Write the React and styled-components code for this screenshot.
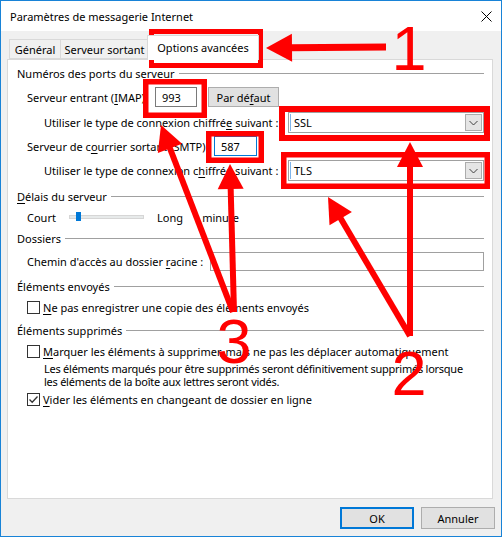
import React from 'react';
import styled, { createGlobalStyle } from 'styled-components';

const Global = createGlobalStyle`
  html, body { margin: 0; padding: 0; background: #ffffff; }
  body { font-family: "Noto Sans", "DejaVu Sans", sans-serif; font-size: 11px; color: #000; }
  * { box-sizing: border-box; }
`;

const Window = styled.div`
  position: relative;
  width: 502px;
  height: 537px;
  border: 1px solid #1883d7;
  display: flex;
  flex-direction: column;
  background: #f0f0f0;
  overflow: hidden;
`;

const TitleBar = styled.div`
  height: 30px;
  flex: none;
  background: #ffffff;
  display: flex;
  align-items: center;
  justify-content: space-between;
  padding: 0 9px;
  font-size: 11px;
`;

const Body = styled.div`
  flex: 1;
  display: flex;
  flex-direction: column;
  padding: 4px 6px 7px 6px;
`;

const TabStrip = styled.div`
  height: 24px;
  display: flex;
  align-items: flex-end;
  padding-left: 2px;
  position: relative;
  z-index: 1;
`;

const Tab = styled.div`
  width: ${p => p.$w}px;
  height: ${p => (p.$active ? 25 : 20)}px;
  margin-left: ${p => p.$ml || 0}px;
  margin-bottom: ${p => (p.$active ? -1 : 0)}px;
  border: 1px solid #d9d9d9;
  border-bottom: ${p => (p.$active ? 'none' : '1px solid #d9d9d9')};
  background: ${p => (p.$active ? '#ffffff' : '#f0f0f0')};
  display: flex;
  align-items: center;
  justify-content: center;
  padding-bottom: ${p => (p.$active ? 2 : 0)}px;
  white-space: nowrap;
`;

const Panel = styled.div`
  height: 440px;
  flex: none;
  margin-right: 2px;
  background: #ffffff;
  border: 1px solid #d9d9d9;
  padding-right: 8px;
  display: flex;
  flex-direction: column;
`;

const Legend = styled.div`
  display: flex;
  align-items: center;
  height: 16px;
  margin-top: ${p => p.$mt}px;
  padding-left: 9px;
  white-space: nowrap;
  &::after {
    content: '';
    flex: 1;
    height: 1px;
    background: #a0a0a0;
    margin-left: 4px;
  }
`;

const Row = styled.div`
  display: flex;
  align-items: center;
  height: ${p => p.$h || 16}px;
  margin-top: ${p => p.$mt}px;
  padding-left: ${p => p.$pl}px;
  white-space: nowrap;
`;

const Label = styled.span`
  flex: none;
  width: ${p => (p.$w ? `${p.$w}px` : 'auto')};
  padding-left: ${p => p.$pl || 0}px;
`;

const Key = styled.span`
  text-decoration: underline;
  text-underline-offset: 2px;
  text-decoration-thickness: 1px;
`;

const TextInput = styled.div`
  flex: none;
  width: ${p => p.$w}px;
  height: 20px;
  border: 1px solid ${p => (p.$focus ? '#0078d7' : '#7a7a7a')};
  background: #fff;
  display: flex;
  align-items: center;
  padding-left: 6px;
`;

const PathInput = styled.div`
  flex: 1;
  height: 19px;
  border: 1px solid #a0a0a0;
  background: #fff;
`;

const Button = styled.div`
  flex: none;
  width: ${p => p.$w}px;
  height: ${p => p.$h || 22}px;
  margin-left: ${p => p.$ml || 0}px;
  background: #e1e1e1;
  border: ${p => (p.$default ? '2px solid #0078d7' : '1px solid #adadad')};
  display: flex;
  align-items: center;
  justify-content: center;
`;

const Combo = styled.div`
  flex: none;
  width: 196px;
  height: 21px;
  border: 1px solid #a0a0a0;
  background: #fff;
  display: flex;
  align-items: center;
  padding: 1px;
`;

const ComboText = styled.div`
  flex: 1;
  height: 100%;
  display: flex;
  align-items: center;
  padding-left: 3px;
  border-left: 1px solid #7eb4ea;
`;

const ComboButton = styled.div`
  flex: none;
  width: 17px;
  height: 17px;
  background: #e5e5e5;
  border: 1px solid #acacac;
  display: flex;
  align-items: center;
  justify-content: center;
`;

const Track = styled.div`
  position: relative;
  flex: none;
  width: 75px;
  height: 4px;
  background: #e7eaea;
  border: 1px solid #d6d6d6;
`;

const Thumb = styled.div`
  position: absolute;
  left: 6px;
  top: -4px;
  width: 5px;
  height: 9px;
  background: #0078d7;
`;

const Box = styled.div`
  flex: none;
  width: 13px;
  height: 13px;
  border: 1px solid #333333;
  background: #fff;
  margin-right: 3px;
  display: flex;
  align-items: center;
  justify-content: center;
`;

const Desc = styled.div`
  margin-top: ${p => p.$mt}px;
  padding-left: 36px;
  line-height: 13px;
  white-space: nowrap;
  letter-spacing: -0.25px;
`;

const Footer = styled.div`
  height: 22px;
  margin-top: 8px;
  display: flex;
  justify-content: flex-end;
  gap: 7px;
`;

const Overlay = styled.svg`
  position: absolute;
  left: -1px;
  top: -1px;
  width: 502px;
  height: 537px;
  pointer-events: none;
  overflow: visible;
`;

const RED = '#ff0000';

function Arrow({ from, to, w = 6, hl = 25, hw = 26 }) {
  const dx = to[0] - from[0];
  const dy = to[1] - from[1];
  const len = Math.hypot(dx, dy);
  const ux = dx / len;
  const uy = dy / len;
  const bx = to[0] - ux * hl;
  const by = to[1] - uy * hl;
  const px = -uy * (hw / 2);
  const py = ux * (hw / 2);
  const pts = `${to[0]},${to[1]} ${bx + px},${by + py} ${bx - px},${by - py}`;
  return (
    <g>
      <line x1={from[0]} y1={from[1]} x2={bx + ux * 2} y2={by + uy * 2} stroke={RED} strokeWidth={w} />
      <polygon points={pts} fill={RED} />
    </g>
  );
}

function RedBox({ x1, y1, x2, y2, t = 5.5 }) {
  return (
    <rect
      x={x1 + t / 2}
      y={y1 + t / 2}
      width={x2 - x1 + 1 - t}
      height={y2 - y1 + 1 - t}
      fill="none"
      stroke={RED}
      strokeWidth={t}
    />
  );
}

const Chevron = () => (
  <svg width="9" height="6" viewBox="0 0 9 6">
    <polyline points="0.5,1 4.5,5 8.5,1" fill="none" stroke="#404040" strokeWidth="1" />
  </svg>
);

const CloseIcon = () => (
  <svg width="11" height="11" viewBox="0 0 11 11">
    <line x1="0.5" y1="0.5" x2="10.5" y2="10.5" stroke="#000" strokeWidth="1" />
    <line x1="10.5" y1="0.5" x2="0.5" y2="10.5" stroke="#000" strokeWidth="1" />
  </svg>
);

const Check = () => (
  <svg width="11" height="11" viewBox="0 0 11 11">
    <polyline points="1.5,5.5 4.2,8.3 9.5,2.5" fill="none" stroke="#333" strokeWidth="1.3" />
  </svg>
);

const numFont = 'Liberation Sans, Arial, sans-serif';

export default function App() {
  return (
    <>
      <Global />
      <Window>
        <TitleBar>
          <span>Paramètres de messagerie Internet</span>
          <CloseIcon />
        </TitleBar>
        <Body>
          <TabStrip>
            <Tab $w={52}>Général</Tab>
            <Tab $w={89} $ml={-1}>Serveur sortant</Tab>
            <Tab $w={112} $ml={-2} $active>Options avancées</Tab>
          </TabStrip>
          <Panel>
            <Legend $mt={5}>Numéros des ports du serveur</Legend>
            <Row $mt={6} $h={20} $pl={19}>
              <Label $w={128}>Serveur entrant (<Key>I</Key>MAP)</Label>
              <TextInput $w={42}>993</TextInput>
              <Button $w={71} $h={20} $ml={11}>Par dé<Key>f</Key>aut</Button>
            </Row>
            <Row $mt={5} $h={21} $pl={36}>
              <Label $w={244}>Utiliser le type de connexion chiffré<Key>e</Key> suivant :</Label>
              <Combo>
                <ComboText>SSL</ComboText>
                <ComboButton><Chevron /></ComboButton>
              </Combo>
            </Row>
            <Row $mt={3} $h={20} $pl={19}>
              <Label $w={187}>Serveur de c<Key>o</Key>urrier sortant (SMTP) :</Label>
              <TextInput $w={43} $focus>587</TextInput>
            </Row>
            <Row $mt={4} $h={21} $pl={36}>
              <Label $w={244}>Utiliser le type de connexion c<Key>h</Key>iffrée suivant :</Label>
              <Combo>
                <ComboText>TLS</ComboText>
                <ComboButton><Chevron /></ComboButton>
              </Combo>
            </Row>

            <Legend $mt={7}><span><Key>D</Key>élais du serveur</span></Legend>
            <Row $mt={5} $pl={19}>
              <Label $w={42}>Court</Label>
              <Track><Thumb /></Track>
              <Label $w={49} $pl={13}>Long</Label>
              <Label>1 minute</Label>
            </Row>

            <Legend $mt={5}>Dossiers</Legend>
            <Row $mt={6} $h={19} $pl={19}>
              <Label $w={183}>Chemin d'accès au dossier <Key>r</Key>acine :</Label>
              <PathInput />
            </Row>

            <Legend $mt={7}>Éléments envoyés</Legend>
            <Row $mt={5} $pl={19}>
              <Box />
              <Label><Key>N</Key>e pas enregistrer une copie des éléments envoyés</Label>
            </Row>

            <Legend $mt={7}>Éléments supprimés</Legend>
            <Row $mt={5} $pl={19}>
              <Box />
              <Label><Key>M</Key>arquer les éléments à supprimer, mais ne pas les déplacer automatiquement</Label>
            </Row>
            <Desc $mt={3}>
              Les éléments marqués pour être supprimés seront définitivement supprimés lorsque
              <br />
              les éléments de la boîte aux lettres seront vidés.
            </Desc>
            <Row $mt={3} $pl={19}>
              <Box><Check /></Box>
              <Label><Key>V</Key>ider les éléments en changeant de dossier en ligne</Label>
            </Row>
          </Panel>
          <Footer>
            <Button $w={74} $default>OK</Button>
            <Button $w={74}>Annuler</Button>
          </Footer>
        </Body>

        <Overlay viewBox="0 0 502 537">
          <RedBox x1={149} y1={29} x2={262} y2={67} t={5} />
          <RedBox x1={143} y1={79} x2={206} y2={117} />
          <RedBox x1={279} y1={106} x2={489} y2={140} t={6} />
          <RedBox x1={281} y1={152} x2={489} y2={188} />
          <RedBox x1={206} y1={131} x2={263} y2={162} />

          <Arrow from={[386, 47]} to={[266, 48]} w={7} hl={26} hw={28} />
          <Arrow from={[410, 336]} to={[410, 142]} />
          <Arrow from={[410, 336]} to={[328, 197]} />
          <Arrow from={[233, 312]} to={[161, 125]} />
          <Arrow from={[234, 312]} to={[230, 164]} />

          <text x={409} y={70} fill={RED} fontFamily={numFont} fontSize="63" textAnchor="middle">1</text>
          <text x={409} y={395} fill={RED} fontFamily={numFont} fontSize="63" textAnchor="middle">2</text>
          <text x={234} y={363} fill={RED} fontFamily={numFont} fontSize="63" textAnchor="middle">3</text>
        </Overlay>
      </Window>
    </>
  );
}
